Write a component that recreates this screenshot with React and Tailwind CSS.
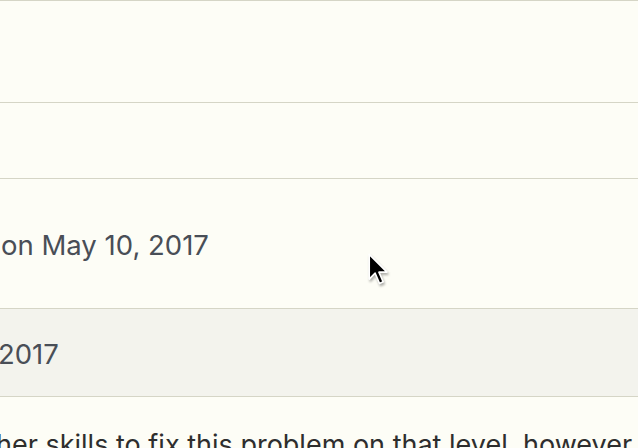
export default function App() {
  return (
    <div className="relative h-[448px] w-[638px] overflow-hidden bg-[#fdfdf6] font-['Inter',sans-serif]">
      <div className="h-[103px] border-t border-b border-[#d5d5c6]" />
      <div className="h-[76px] border-b border-[#d5d5c6]" />
      <div className="flex h-[130px] items-center border-b border-[#d5d5c6] pl-[1px]">
        <span className="text-[27.5px] leading-none text-[#494e57] pt-[5px]">on May 10, 2017</span>
      </div>
      <div className="flex h-[88px] items-center border-b border-[#d5d5c6] bg-[#f3f3ed] -ml-[2px]">
        <span className="text-[27.5px] leading-none text-[#494e57] pt-[4px]">2017</span>
      </div>
      <div className="pt-[34px] -ml-[4px] whitespace-nowrap text-[27px] leading-none text-[#2e2e2e]">
        her skills to fix this problem on that level, however
      </div>
      <svg
        className="absolute left-[366px] top-[251px]"
        width="28"
        height="39"
        viewBox="0 0 26 36"
      >
        <path
          d="M3 3 L3 26 L8.5 20.5 L12.5 30 L16 28.5 L12 19.5 L19.5 19.5 Z"
          fill="#000"
          stroke="#fff"
          strokeWidth="1.5"
          strokeLinejoin="round"
          style={{ filter: "drop-shadow(1px 2px 1px rgba(0,0,0,0.3))" }}
        />
      </svg>
    </div>
  );
}
